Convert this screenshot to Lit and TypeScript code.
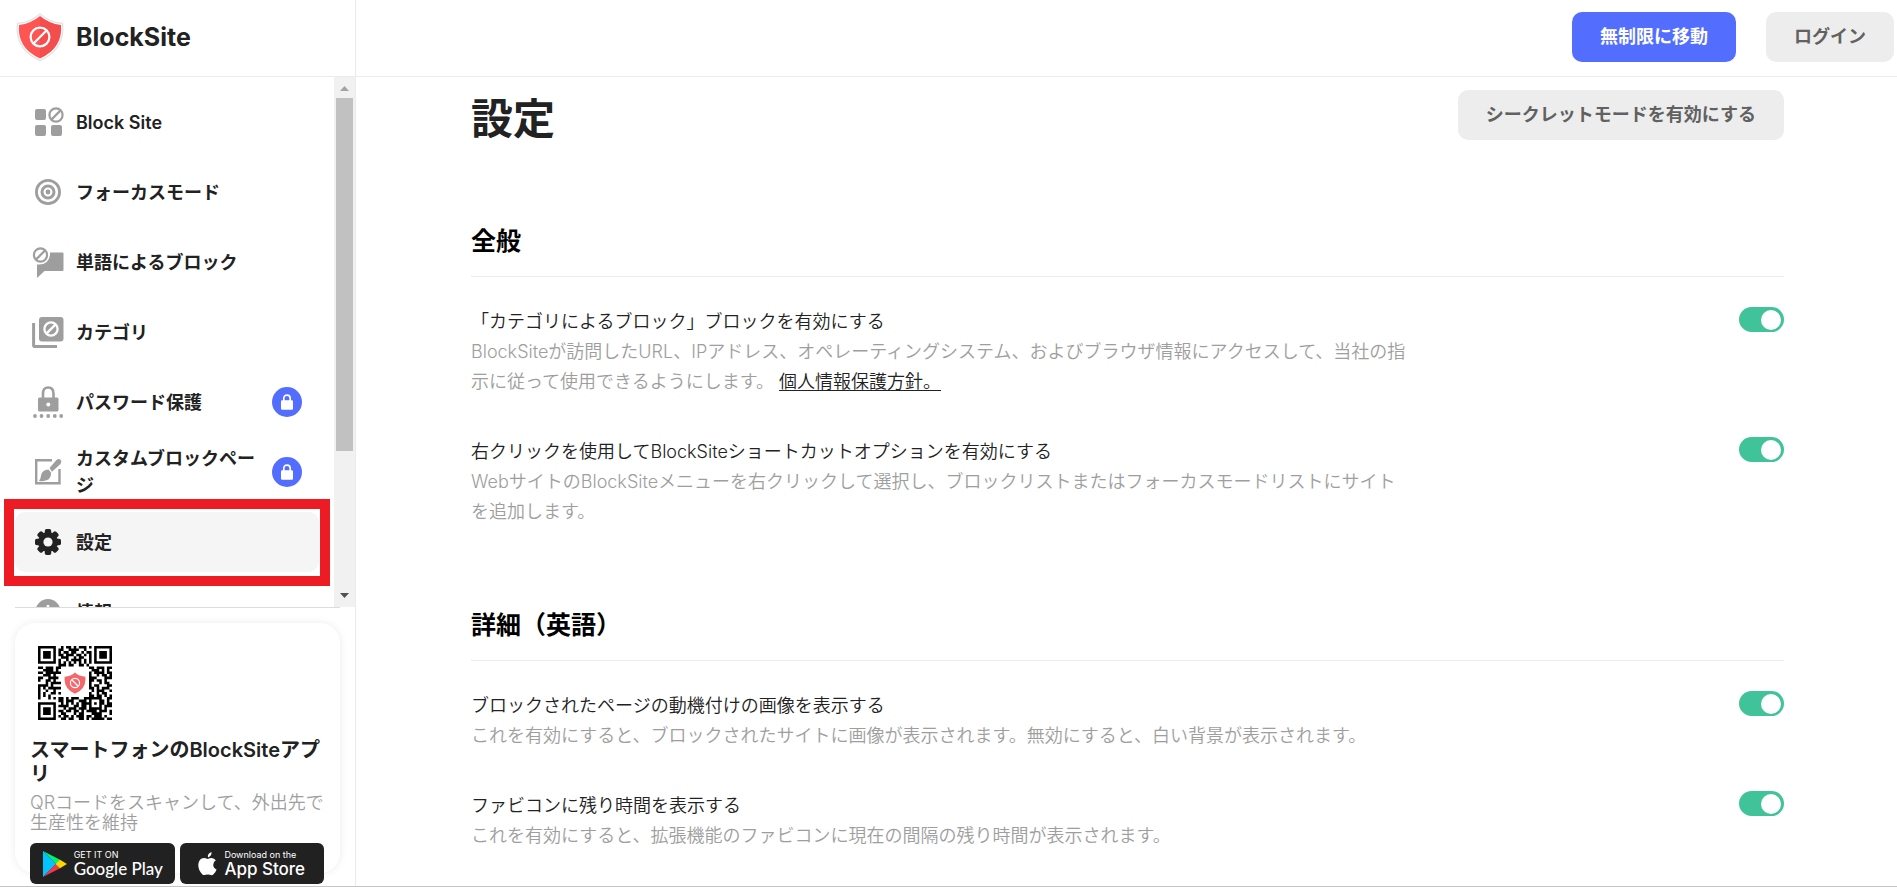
import { LitElement, html, css, svg, nothing } from "lit";
import { customElement, property, state } from "lit/decorators.js";
import { classMap } from "lit/directives/class-map.js";

const ban = (cx: number, cy: number, r: number, w: number, color: string) => {
  const d = r * 0.66;
  return svg`<g fill="none" stroke=${color} stroke-width=${w}>
    <circle cx=${cx} cy=${cy} r=${r}></circle>
    <path d="M${cx - d} ${cy + d}L${cx + d} ${cy - d}"></path></g>`;
};

const G = "#9e9e9e";

const icons: Record<string, unknown> = {
  blocks: svg`<g fill=${G}><rect x="3" y="5" width="11" height="11" rx="2"></rect>
    <rect x="3" y="21" width="11" height="11" rx="2"></rect>
    <rect x="19" y="21" width="11" height="11" rx="2"></rect></g>${ban(24, 11, 6.6, 2.2, G)}`,
  focus: svg`<g fill="none" stroke=${G}><circle cx="16" cy="18" r="11.6" stroke-width="2.8"></circle>
    <circle cx="16" cy="18" r="6" stroke-width="3"></circle></g><circle cx="16" cy="18" r="2.4" fill=${G}></circle>`,
  word: svg`<path d="M18 8.500H30.500Q31.500 8.500 31.500 9.500V26Q31.500 27 30.500 27H12.500L5 34V20.500Q16.500 21.500 18 11z" fill=${G}></path>
    ${ban(8.500, 11, 6.600, 2.200, G)}`,
  category: svg`<path d="M1.600 9V31.200Q1.600 32.500 3 32.500H25" fill="none" stroke=${G} stroke-width="3"></path>
    <rect x="7" y="3" width="24.500" height="24.500" rx="3" fill=${G}></rect>${ban(19, 15, 6.600, 2.300, "#fff")}`,
  password: svg`<path d="M11 15V9.500Q11 3.500 16.200 3.500T21.500 9.500V15" fill="none" stroke=${G} stroke-width="2.600"></path>
    <rect x="6" y="13.500" width="20.500" height="14" rx="1.500" fill=${G}></rect><circle cx="16.300" cy="20.500" r="2" fill="#fff"></circle>
    <g fill=${G}>${[3, 9.5, 16.2, 22.8, 29.2].map((x) => svg`<circle cx=${x} cy="32" r="1.900"></circle>`)}</g>`,
  brush: svg`<path d="M20 6.200H4.200V29.300H27.500V15" fill="none" stroke=${G} stroke-width="2.400"></path>
    <path d="M17.500 14L24.500 6Q26.800 4 28.500 5.800T28.500 10L20 17.800z" fill=${G}></path>
    <path d="M16.500 15.500L19 18.500Q19.500 24.500 14.500 26.300Q10.500 27.500 7 27Q9 24.500 9 21.500Q10 16 16.500 15.500z" fill=${G}></path>`,
  gear: svg`<g fill="#222">${[0, 45, 90, 135].map(
      (a) => svg`<rect x="12.800" y="5" width="6.400" height="26" rx="1.800" transform=${`rotate(${a} 16 18)`}></rect>`,
    )}<circle cx="16" cy="18" r="10"></circle></g><circle cx="16" cy="18" r="4.600" fill="#f5f5f5"></circle>`,
  info: svg`<circle cx="16" cy="17.500" r="12.500" fill=${G}></circle><path d="M16 11v3M16 16v8" stroke="#fff" stroke-width="2.600"></path>`,
};

const SHIELD = "M24 1Q33 9 46.500 10.500Q49.500 36 24 47.500Q-1.500 36 1.500 10.500Q15 9 24 1z";
const shield = (size: number) => html`<svg width=${size} height=${size} viewBox="0 0 48 48" aria-hidden="true">
  <path d=${SHIELD} fill="#fff" stroke="#e4e4e4" stroke-width="1.400"></path>
  <path d="M24 3Q33 10.500 45 12Q47 35 24 45.500z" fill="#f44d4d"></path>
  <path d="M24 3Q15 10.500 3 12Q1 35 24 45.500z" fill="#ff5454"></path>
  ${ban(24, 24, 9.4, 2.2, "#fff")}
</svg>`;

const QR = [
  "XXXXXXX..X.XX.X.XXX.X.XXXXXXX",
  "X.....X.XX..XXXX..X...X.....X",
  "X.XXX.X.X.XX.XX..X.XX.X.XXX.X",
  "X.XXX.X.XX.XXX.XX.X.X.X.XXX.X",
  "X.XXX.X..XXX..X.XX..X.X.XXX.X",
  "X.....X.X..X.XXXX.X.X.X.....X",
  "XXXXXXX.X.X.X.X.X.X.X.XXXXXXX",
  "........XXX.XX..XX.X.........",
  "XX.XXX.XX...........XX.XXX.XX",
  "..XXXX.X.............XXX.X.X.",
  "XX.XXXXXX...........X.XXXX.XX",
  "..XXX.X.............X..X.XX.X",
  "XX..XXXX............XXX...XXX",
  "X..XX.X.............XX.XX.X..",
  "...X.XXXX...........X...X.XX.",
  "XXXX.X..............X.XX...XX",
  "X.X.XXXXX...........XX.X.XXX.",
  "X..X..X..............X.XXX..X",
  "X.X..XX.X...........X..X.XX..",
  "X.X.X...............XX.XX.X.X",
  "X...X.X.XX.X.XXX..XXXXXXX..XX",
  "........XX.XXX..XXX.X...XX.X.",
  "XXXXXXX..X.X.X.X.XXXX.X.XX.XX",
  "X.....X.XXXX..XX.XX.X...X.XXX",
  "X.XXX.X...X.XXX.XXX.XXXXX.X..",
  "X.XXX.X.XX.XX.XX.X.XXXX.XXX.X",
  "X.XXX.X..XX...X.XX...XXXX...X",
  "X.....X.X.XX.X.XXX.XX.XXX.X..",
  "XXXXXXX..XX.XX..XX.X.XXXXX.XX",
];
const QR_PATH = QR.map((row, y) =>
  [...row].map((c, x) => (c === "X" ? `M${x} ${y}h1v1h-1z` : "")).join(""),
).join("");

@customElement("toggle-row")
export class ToggleRow extends LitElement {
  @property() heading = "";
  @property() text = "";
  @property() link = "";
  @state() private on = true;

  static styles = css`
    :host { display: block; }
    .row { display: flex; justify-content: space-between; align-items: flex-start; gap: 24px; }
    .copy { max-width: 937px; font-size: 18px; line-height: 30px; font-weight: 350; }
    .heading { display: block; color: #222; }
    .text { margin: 0; color: #9e9e9e; }
    .link { color: #222; text-underline-offset: 2px; }
    .switch {
      appearance: none; flex: none; width: 45px; height: 25px; margin: 0; padding: 2px 3px;
      border-radius: 13px; background: #bdbdbd; display: flex; align-items: center; cursor: pointer;
      box-sizing: border-box;
    }
    .switch::before { content: ""; width: 20px; height: 20px; border-radius: 50%; background: #fff; }
    .switch:checked { background: #41c399; justify-content: flex-end; }
  `;

  render() {
    return html`<div class="row">
      <div class="copy">
        <label class="heading" for="switch">${this.heading}</label>
        <p class="text">${this.text}${this.link ? html` <a class="link" href="#privacy">${this.link}</a>` : nothing}</p>
      </div>
      <input id="switch" class="switch" type="checkbox" .checked=${this.on}
        @change=${(e: Event) => (this.on = (e.target as HTMLInputElement).checked)} />
    </div>`;
  }
}

interface NavItem { icon: string; label: string; locked?: boolean; }

@customElement("app-root")
export class AppRoot extends LitElement {
  @state() private active = "gear";

  private nav: NavItem[] = [
    { icon: "blocks", label: "Block Site" },
    { icon: "focus", label: "フォーカスモード" },
    { icon: "word", label: "単語によるブロック" },
    { icon: "category", label: "カテゴリ" },
    { icon: "password", label: "パスワード保護", locked: true },
    { icon: "brush", label: "カスタムブロックページ", locked: true },
    { icon: "gear", label: "設定" },
    { icon: "info", label: "情報" },
  ];

  static styles = css`
    :host {
      display: flex; flex-direction: column; height: 100vh; box-sizing: border-box; overflow: hidden;
      border-bottom: 1px solid #c4c4c4; background: #fff; color: #222;
      font-family: Inter, "Noto Sans CJK JP", sans-serif;
    }
    a { text-decoration: none; color: inherit; }
    svg { display: block; flex: none; }
    .top { display: flex; flex: none; height: 76px; border-bottom: 1px solid #ebebeb; }
    .brand {
      display: flex; align-items: center; gap: 12px; width: 356px; flex: none;
      padding: 0 0 3px 16px; box-sizing: border-box; border-right: 1px solid #ebebeb;
      font-size: 25px; font-weight: 700;
    }
    .actions { display: flex; flex: 1; justify-content: flex-end; align-items: flex-start; gap: 30px; padding: 12px 3px 0 0; }
    .btn {
      height: 50px; padding: 0 28px; border: 0; border-radius: 10px; background: #ededed; color: #616161;
      font-family: inherit; font-size: 18px; line-height: 24px; font-weight: 600; cursor: pointer; white-space: nowrap;
    }
    .btn.primary { background: #536dfe; color: #fff; }
    .body { display: flex; flex: 1; min-height: 0; }
    .side { display: flex; flex-direction: column; flex: none; width: 356px; box-sizing: border-box; border-right: 1px solid #ebebeb; }
    .scroller { display: flex; flex: 1; min-height: 0; }
    .nav { flex: 1; overflow: hidden; }
    .list { list-style: none; margin: 0; padding: 15px 15px 0; display: grid; gap: 10px; }
    .item { position: relative; }
    .entry {
      display: flex; align-items: center; height: 60px; padding: 0 17px; border-radius: 10px; box-sizing: border-box;
      font-size: 18px; line-height: 27px; font-weight: 600;
    }
    .entry.active { background: #f5f5f5; }
    .label { flex: 1; padding: 0 10px 0 12px; }
    .marker { position: absolute; inset: -13px -11px -14px; border: 10px solid #ed1c24; pointer-events: none; }
    .lock { display: grid; place-items: center; width: 30px; height: 30px; border-radius: 50%; background: #536dfe; flex: none; }
    .bar { display: flex; flex-direction: column; align-items: center; width: 21px; background: #f1f1f1; flex: none; }
    .thumb { width: 17px; height: 353px; background: #c1c1c1; }
    .space { flex: 1; }
    .promo { flex: none; margin: 0 15px; border-top: 1px solid #dcdcdc; padding-top: 15px; height: 263px; }
    .card { height: 250px; border-radius: 20px; box-shadow: 0 0 8px rgba(0, 0, 0, 0.08); padding: 23px 7px 0 15px; box-sizing: border-box; }
    .qr { display: grid; width: 74px; margin-left: 8px; }
    .qr > * { grid-area: 1 / 1; place-self: center; }
    .promo-title { margin: 18px 0 0; font-size: 20px; line-height: 24px; font-weight: 600; }
    .promo-text { margin: 7px 0 10px; font-size: 18px; line-height: 20px; font-weight: 350; color: #9e9e9e; }
    .stores { display: flex; gap: 5px; padding-right: 9px; }
    .store {
      display: flex; flex: 1; align-items: center; justify-content: center; height: 41px; border-radius: 6px;
      background: #212121; color: #fff; gap: 7px; white-space: nowrap;
    }
    .small { display: block; font-size: 9px; line-height: 10px; }
    .big { display: block; font-size: 17px; line-height: 18px; font-weight: 500; }
    .google { font-family: Lato, sans-serif; }
    .main { flex: 1; min-width: 0; overflow: hidden; padding: 13px 113px 0 115px; }
    .head { display: flex; justify-content: space-between; align-items: flex-end; margin-bottom: 86px; }
    .title { margin: 0; font-size: 42px; line-height: 42px; font-weight: 700; }
    .section { margin-bottom: 83px; }
    .section-title { margin: 0 0 30px; padding-bottom: 20px; border-bottom: 1px solid #ebebeb; color: #000; font-size: 25px; line-height: 30px; font-weight: 600; }
    .rows { display: grid; gap: 40px; }
  `;

  private renderItem(item: NavItem) {
    const active = item.icon === this.active;
    return html`<li class="item">
      <a class=${classMap({ entry: true, active })} href="#${item.icon}" @click=${() => (this.active = item.icon)}>
        <svg width="32" height="36" viewBox="0 0 32 36" aria-hidden="true">${icons[item.icon]}</svg>
        <span class="label">${item.label}</span>
        ${item.locked
          ? html`<span class="lock"><svg width="12" height="16" viewBox="0 0 12 16" aria-hidden="true">
              <path d="M2.800 7V4.500Q2.800 1.200 6 1.200T9.200 4.500V7" fill="none" stroke="#fff" stroke-width="1.700"></path>
              <rect x="0" y="6.300" width="12" height="9.400" rx="1.200" fill="#fff"></rect></svg></span>`
          : nothing}
      </a>
      ${active ? html`<span class="marker"></span>` : nothing}
    </li>`;
  }

  render() {
    return html`
      <header class="top">
        <a class="brand" href="#home">${shield(48)}<span>BlockSite</span></a>
        <div class="actions">
          <button class="btn primary">無制限に移動</button>
          <button class="btn">ログイン</button>
        </div>
      </header>
      <div class="body">
        <aside class="side">
          <div class="scroller">
            <nav class="nav"><ul class="list">${this.nav.map((i) => this.renderItem(i))}</ul></nav>
            <div class="bar" aria-hidden="true">
              <svg width="21" height="21" viewBox="0 0 21 21"><path d="M6 14L10.500 9L15 14z" fill="#a3a3a3"></path></svg>
              <div class="thumb"></div><div class="space"></div>
              <svg width="21" height="21" viewBox="0 0 21 21"><path d="M6 7L10.500 12L15 7z" fill="#505050"></path></svg>
            </div>
          </div>
          <div class="promo">
            <div class="card">
              <div class="qr">
                <svg width="74" height="74" viewBox="0 0 29 29" aria-hidden="true"><path d=${QR_PATH} fill="#000"></path></svg>
                <svg width="22" height="22" viewBox="0 0 48 48" aria-hidden="true">
                  <path d=${SHIELD} fill="#f4686c"></path>
                  <g transform="rotate(90 24 24)">${ban(24, 24, 10, 2.6, "#fff")}</g>
                </svg>
              </div>
              <h2 class="promo-title">スマートフォンのBlockSiteアプリ</h2>
              <p class="promo-text">QRコードをスキャンして、外出先で生産性を維持</p>
              <div class="stores">
                <a class="store" href="#google-play">
                  <svg width="25" height="28" viewBox="0 0 25 28" aria-hidden="true">
                    <path d="M1 1L14 14L1 27z" fill="#00c3ff"></path>
                    <path d="M1 1L18.500 10L14 14z" fill="#00f076"></path>
                    <path d="M1 27L18.500 18L14 14z" fill="#f93647"></path>
                    <path d="M18 9.700L25 14L18 18.300L13.500 14z" fill="#ffd500"></path>
                  </svg>
                  <span><span class="small">GET IT ON</span><span class="big google">Google Play</span></span>
                </a>
                <a class="store" href="#app-store">
                  <svg width="19" height="24" viewBox="0 0 19 24" aria-hidden="true">
                    <path d="M13.500 0Q14 3.500 10 5.500Q9 1.800 13.500 0zM9.800 7Q11.500 6 13.500 6Q16.300 6.200 17.800 8.300Q15 10 15.200 13Q15.500 16.200 18.600 17.400Q17.500 20.600 15.300 22.600Q13.800 23.600 12 22.800Q9.800 22 7.700 22.800Q5.800 23.600 4.400 22.400Q0 18 .3 12.300Q1 6.500 5.800 6Q7.600 6.100 9.800 7z" fill="#fff"></path>
                  </svg>
                  <span><span class="small">Download on the</span><span class="big">App Store</span></span>
                </a>
              </div>
            </div>
          </div>
        </aside>
        <main class="main">
          <div class="head">
            <h1 class="title">設定</h1>
            <button class="btn">シークレットモードを有効にする</button>
          </div>
          <section class="section">
            <h2 class="section-title">全般</h2>
            <div class="rows">
              <toggle-row heading="「カテゴリによるブロック」ブロックを有効にする"
                text="BlockSiteが訪問したURL、IPアドレス、オペレーティングシステム、およびブラウザ情報にアクセスして、当社の指示に従って使用できるようにします。"
                link="個人情報保護方針。"></toggle-row>
              <toggle-row heading="右クリックを使用してBlockSiteショートカットオプションを有効にする"
                text="WebサイトのBlockSiteメニューを右クリックして選択し、ブロックリストまたはフォーカスモードリストにサイトを追加します。"></toggle-row>
            </div>
          </section>
          <section class="section">
            <h2 class="section-title">詳細（英語）</h2>
            <div class="rows">
              <toggle-row heading="ブロックされたページの動機付けの画像を表示する"
                text="これを有効にすると、ブロックされたサイトに画像が表示されます。無効にすると、白い背景が表示されます。"></toggle-row>
              <toggle-row heading="ファビコンに残り時間を表示する"
                text="これを有効にすると、拡張機能のファビコンに現在の間隔の残り時間が表示されます。"></toggle-row>
            </div>
          </section>
        </main>
      </div>
    `;
  }
}
